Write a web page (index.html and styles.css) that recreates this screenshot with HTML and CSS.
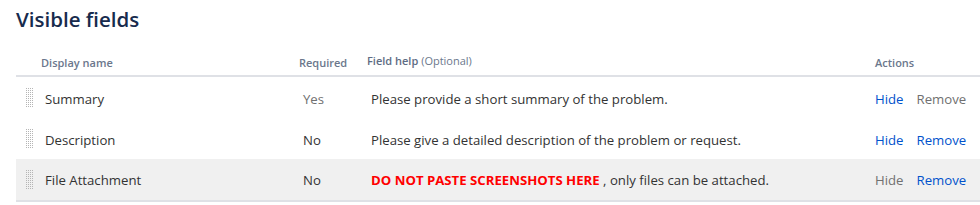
FILE: index.html
```html
<!DOCTYPE html>
<html>
<head>
<meta charset="utf-8">
<link rel="stylesheet" href="styles.css">
</head>
<body>
<div class="page">
  <h2 class="title">Visible fields</h2>
  <div class="table">
    <div class="row head">
      <div></div>
      <div class="h">Display name</div>
      <div class="h">Required</div>
      <div class="h help-h">Field help <span class="opt">(Optional)</span></div>
      <div class="h">Actions</div>
    </div>
    <div class="row r1">
      <svg class="handle" width="8" height="20" viewBox="0 0 8 20"><rect width="8" height="20" fill="url(#dots)"/><defs><pattern id="dots" width="2" height="2" patternUnits="userSpaceOnUse"><rect width="1" height="1" fill="#b5b5b5"/></pattern></defs></svg>
      <div class="name">Summary</div>
      <div class="req muted">Yes</div>
      <div class="help">Please provide a short summary of the problem.</div>
      <div class="actions"><span class="link">Hide</span><span class="dis">Remove</span></div>
    </div>
    <div class="row r2">
      <svg class="handle" width="8" height="20" viewBox="0 0 8 20"><rect width="8" height="20" fill="url(#dots)"/></svg>
      <div class="name">Description</div>
      <div class="req">No</div>
      <div class="help">Please give a detailed description of the problem or request.</div>
      <div class="actions"><span class="link">Hide</span><span class="link">Remove</span></div>
    </div>
    <div class="row r3 hl">
      <svg class="handle" width="8" height="20" viewBox="0 0 8 20"><rect width="8" height="20" fill="url(#dots)"/></svg>
      <div class="name">File Attachment</div>
      <div class="req">No</div>
      <div class="help"><b class="warn">DO NOT PASTE SCREENSHOTS HERE</b> , only files can be attached.</div>
      <div class="actions"><span class="dis">Hide</span><span class="link">Remove</span></div>
    </div>
  </div>
</div>
</body>
</html>
```
FILE: styles.css
```css
html, body { margin: 0; padding: 0; background: #fff; }
body { font-family: "Open Sans", "Noto Sans", sans-serif; color: #333; }
.page { padding: 0 0 0 16px; }
.title { margin: 0; padding-top: 6px; font-size: 20.5px; line-height: 26px; font-weight: 600; color: #172b4d; }
.table { margin-top: 13px; }
.row { display: grid; grid-template-columns: 25px 258px 68px 508px 1fr; align-items: center; }
.head { height: 30px; border-bottom: 2px solid #dfe1e6; }
.h { font-size: 11px; font-weight: 600; color: #6b778c; padding-top: 5px; }
.help-h { padding-top: 0; color: #5e6c84; }
.opt { font-weight: 400; color: #6b778c; }
.r1 { height: 42px; }
.r2 { height: 40px; }
.r3 { height: 41px; border-bottom: 2px solid #dfe1e6; }
.hl { background: #f0f0f0; }
.name, .req, .help, .actions { font-size: 13.2px; padding-top: 1px; }
.name { padding-left: 4px; color: #333; }
.req { padding-left: 4px; color: #333; }
.req.muted { color: #707070; }
.help { padding-left: 4px; color: #333; }
.warn { color: #ff0000; font-weight: 700; }
.actions { display: flex; gap: 13px; }
.link { color: #0052cc; }
.dis { color: #707070; }
.handle { display: block; margin-left: 10px; }
```
